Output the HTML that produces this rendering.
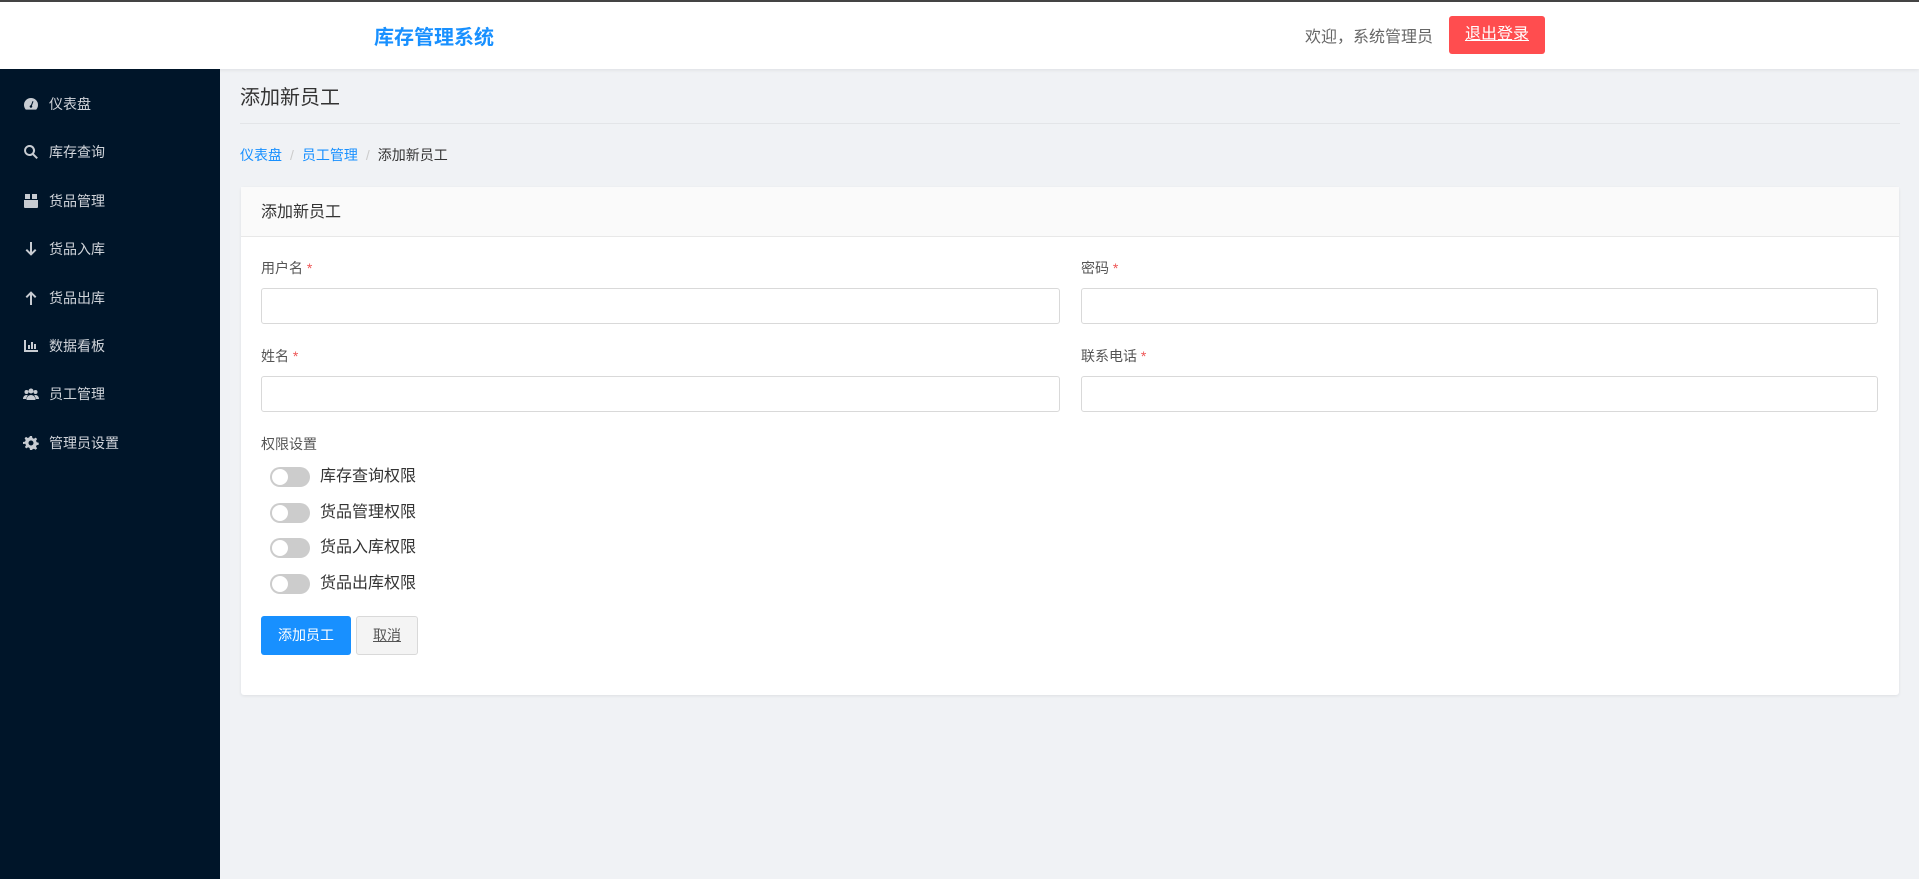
<!DOCTYPE html>
<html><head><meta charset="utf-8"><style>
*{margin:0;padding:0;box-sizing:border-box}
body{width:1919px;height:879px;overflow:hidden;background:#f0f2f5;font-family:"Liberation Sans","Noto Sans CJK SC",sans-serif;position:relative}
.hdr{position:absolute;left:0;top:0;width:1919px;height:69px;background:#fff;border-top:2px solid #444;box-shadow:0 1px 4px rgba(0,0,0,.08)}
.logo{position:absolute;left:374px;top:24px;font-size:20px;font-weight:bold;color:#1890ff;line-height:24px}
.wel{position:absolute;left:1305px;top:26px;font-size:16px;color:#666;line-height:20px}
.out{position:absolute;left:1449px;top:14px;width:96px;height:38px;background:#ff4d4f;border-radius:3px;color:#fff;font-size:16px;text-decoration:underline;text-align:center;line-height:38px}
.side{position:absolute;left:0;top:69px;width:220px;height:810px;background:#001529}
.it{position:absolute;left:23px;height:20px;color:#d0d4da;font-size:14px;line-height:20px}
.it svg{position:absolute;left:0;top:2px;width:16px;height:16px;fill:#c8ccd2}
.it span{position:absolute;left:26px;white-space:nowrap}
.abs{position:absolute}
.pt{left:240px;top:86px;font-size:20px;color:#333;line-height:24px}
.hr{left:240px;top:123px;width:1660px;height:1px;background:#e3e5e8}
.bc{left:240px;top:146px;font-size:14px;line-height:18px;color:#333}
.bc a{color:#1890ff;text-decoration:none}.bc i{color:#ccc;font-style:normal;margin:0 8px}
.card{left:241px;top:187px;width:1658px;height:508px;background:#fff;border-radius:3px;box-shadow:0 1px 3px rgba(0,0,0,.08)}
.ch{position:absolute;left:0;top:0;width:100%;height:50px;background:#fafafa;border-bottom:1px solid #e8e8e8;font-size:16px;color:#333;padding:16px 20px;line-height:20px}
.lb{font-size:14px;color:#555;line-height:18px}
.lb b{color:#e55;font-weight:normal}
.in{height:36px;border:1px solid #d9d9d9;border-radius:3px;background:#fff}
.tg{left:270px;width:40px;height:20px;border-radius:10px;background:#ccc}
.tg::after{content:"";position:absolute;left:2px;top:2px;width:16px;height:16px;border-radius:50%;background:#fff}
.tt{left:320px;font-size:16px;color:#333;line-height:20px}
.b1{left:261px;top:616px;width:90px;height:39px;background:#1890ff;color:#fff;border-radius:3px;font-size:14px;text-align:center;line-height:39px}
.b2{left:356px;top:616px;width:62px;height:39px;background:#f4f4f4;border:1px solid #d9d9d9;color:#555;border-radius:3px;font-size:14px;text-align:center;line-height:37px;text-decoration:underline}
</style></head><body>
<div class="hdr"><div class="logo">库存管理系统</div><div class="wel">欢迎，系统管理员</div><div class="out">退出登录</div></div>
<div class="side"></div>
<div class="it" style="top:94px"><svg viewBox="0 0 16 16"><path d="M8 2a7 7 0 0 0-7 7c0 1.8.7 3.4 1.8 4.6h10.4A7 7 0 0 0 15 9a7 7 0 0 0-7-7zm2.5 3.5L8.9 9.6a1.3 1.3 0 1 1-1-.4L9.6 5z"/></svg><span>仪表盘</span></div>
<div class="it" style="top:142px"><svg viewBox="0 0 16 16"><path d="M6.5 1a5.5 5.5 0 0 1 4.5 8.7l3.9 3.9-1.4 1.4-3.9-3.9A5.5 5.5 0 1 1 6.5 1zm0 2a3.5 3.5 0 1 0 0 7 3.5 3.5 0 0 0 0-7z"/></svg><span>库存查询</span></div>
<div class="it" style="top:191px"><svg viewBox="0 0 16 16"><path d="M2 1h5v5H2zM9 1h5v5H9zM1 7h14v7a1 1 0 0 1-1 1H2a1 1 0 0 1-1-1z"/></svg><span>货品管理</span></div>
<div class="it" style="top:239px"><svg viewBox="0 0 16 16"><path d="M7 1h2v10l3-3 1.4 1.4L8 14.8 2.6 9.4 4 8l3 3z"/></svg><span>货品入库</span></div>
<div class="it" style="top:288px"><svg viewBox="0 0 16 16"><path d="M7 15h2V5l3 3 1.4-1.4L8 1.2 2.6 6.6 4 8l3-3z"/></svg><span>货品出库</span></div>
<div class="it" style="top:336px"><svg viewBox="0 0 16 16"><path d="M1 2h2v10h12v2H1zM5 7h2v4H5zM8 4h2v7H8zM11 6h2v5h-2z"/></svg><span>数据看板</span></div>
<div class="it" style="top:384px"><svg viewBox="0 0 16 16"><circle cx="8" cy="5" r="2.5"/><circle cx="3.5" cy="6" r="2"/><circle cx="12.5" cy="6" r="2"/><path d="M3.5 14c0-3 2-5 4.5-5s4.5 2 4.5 5zM0 13c0-2 1.3-4 3.5-4 .6 0 1 .1 1.3.3C4 10.5 3.3 12 3.3 13zM16 13c0-2-1.3-4-3.5-4-.6 0-1 .1-1.300.3.8 1.2 1.5 2.7 1.5 3.7z"/></svg><span>员工管理</span></div>
<div class="it" style="top:433px"><svg viewBox="0 0 16 16"><path d="M7 1h2l.4 2 1.5.7 1.8-1.1 1.4 1.4-1.1 1.8.7 1.5 2 .4v2l-2 .4-.7 1.5 1.1 1.8-1.4 1.4-1.8-1.1-1.5.7L9 15H7l-.4-2-1.5-.7-1.8 1.1-1.4-1.4 1.1-1.8-.7-1.5L0 9V7l2-.4.7-1.5-1.1-1.8 1.4-1.4 1.8 1.1 1.5-.7zm1 4.5a2.5 2.5 0 1 0 0 5 2.5 2.5 0 0 0 0-5z"/></svg><span>管理员设置</span></div>
<div class="abs pt">添加新员工</div>
<div class="abs hr"></div>
<div class="abs bc"><a>仪表盘</a><i>/</i><a>员工管理</a><i>/</i>添加新员工</div>
<div class="abs card"><div class="ch">添加新员工</div></div>
<div class="abs lb" style="left:261px;top:259px">用户名 <b>*</b></div>
<div class="abs lb" style="left:1081px;top:259px">密码 <b>*</b></div>
<div class="abs in" style="left:261px;top:288px;width:799px"></div>
<div class="abs in" style="left:1081px;top:288px;width:797px"></div>
<div class="abs lb" style="left:261px;top:347px">姓名 <b>*</b></div>
<div class="abs lb" style="left:1081px;top:347px">联系电话 <b>*</b></div>
<div class="abs in" style="left:261px;top:376px;width:799px"></div>
<div class="abs in" style="left:1081px;top:376px;width:797px"></div>
<div class="abs lb" style="left:261px;top:435px">权限设置</div>
<div class="abs tg" style="top:467px"></div><div class="abs tt" style="top:467px">库存查询权限</div>
<div class="abs tg" style="top:503px"></div><div class="abs tt" style="top:503px">货品管理权限</div>
<div class="abs tg" style="top:538px"></div><div class="abs tt" style="top:538px">货品入库权限</div>
<div class="abs tg" style="top:574px"></div><div class="abs tt" style="top:574px">货品出库权限</div>
<div class="abs b1">添加员工</div>
<div class="abs b2">取消</div>
</body></html>
